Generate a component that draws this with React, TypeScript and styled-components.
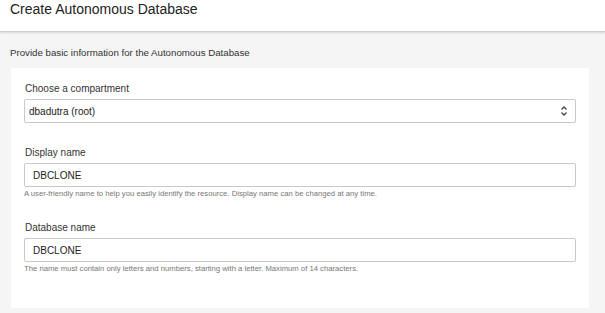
import React from "react";
import styled, { createGlobalStyle } from "styled-components";

const Global = createGlobalStyle`
  html, body { margin: 0; padding: 0; background: #f5f5f5; }
  body { font-family: "Liberation Sans", Arial, sans-serif; color: #333; }
`;

const Page = styled.div`
  width: 605px;
  height: 313px;
  overflow: hidden;
  background: #f5f5f5;
  display: flex;
  flex-direction: column;
`;

const Header = styled.header`
  height: 32px;
  background: #fff;
  border-bottom: 1px solid #cfcfcf;
  box-shadow: 0 1px 2px rgba(0, 0, 0, 0.12);
  padding: 1px 10px 0;
  box-sizing: border-box;
  display: flex;
  align-items: flex-start;
  flex-shrink: 0;
`;

const Title = styled.h1`
  margin: 0;
  font-size: 14px;
  font-weight: 400;
  line-height: 17px;
  color: #222;
`;

const Body = styled.main`
  padding: 14px 16px 0 11px;
  display: flex;
  flex-direction: column;
`;

const Intro = styled.p`
  margin: 0 0 9px -1px;
  font-size: 9.7px;
  line-height: 13px;
  color: #333;
`;

const Card = styled.section`
  background: #fff;
  border-radius: 2px;
  padding: 14px 13px 0 13px;
  height: 240px;
  box-sizing: border-box;
  display: flex;
  flex-direction: column;
`;

const Field = styled.div<{ $gap: number }>`
  display: flex;
  flex-direction: column;
  margin-bottom: ${(p) => p.$gap}px;
`;

const Label = styled.label`
  font-size: 10px;
  line-height: 13px;
  color: #333;
  margin-bottom: 4px;
  margin-left: 1px;
`;

const Box = styled.div<{ $select?: boolean }>`
  height: 24px;
  box-sizing: border-box;
  border: 1px solid #c7c9cc;
  border-radius: 2px;
  background: #fff;
  display: flex;
  align-items: center;
  padding: 0 7px 0 ${(p) => (p.$select ? 4 : 8)}px;
  font-size: 10px;
  color: #222;
`;

const Value = styled.span`
  flex: 1;
`;

const Help = styled.div`
  font-size: 7.7px;
  line-height: 11px;
  color: #777;
  margin-top: 1px;
`;

const Stepper = () => (
  <svg width="8" height="12" viewBox="0 0 8 12" fill="none" stroke="#444" strokeWidth="1.3">
    <path d="M1.5 4.5 L4 2 L6.5 4.5" />
    <path d="M1.5 7.5 L4 10 L6.5 7.5" />
  </svg>
);

export default function App() {
  return (
    <>
      <Global />
      <Page>
        <Header>
          <Title>Create Autonomous Database</Title>
        </Header>
        <Body>
          <Intro>Provide basic information for the Autonomous Database</Intro>
          <Card>
            <Field $gap={23}>
              <Label>Choose a compartment</Label>
              <Box $select>
                <Value>dbadutra (root)</Value>
                <Stepper />
              </Box>
            </Field>
            <Field $gap={22}>
              <Label>Display name</Label>
              <Box>
                <Value>DBCLONE</Value>
              </Box>
              <Help>
                A user-friendly name to help you easily identify the resource. Display name can be changed at any time.
              </Help>
            </Field>
            <Field $gap={0}>
              <Label>Database name</Label>
              <Box>
                <Value>DBCLONE</Value>
              </Box>
              <Help>
                The name must contain only letters and numbers, starting with a letter. Maximum of 14 characters.
              </Help>
            </Field>
          </Card>
        </Body>
      </Page>
    </>
  );
}
